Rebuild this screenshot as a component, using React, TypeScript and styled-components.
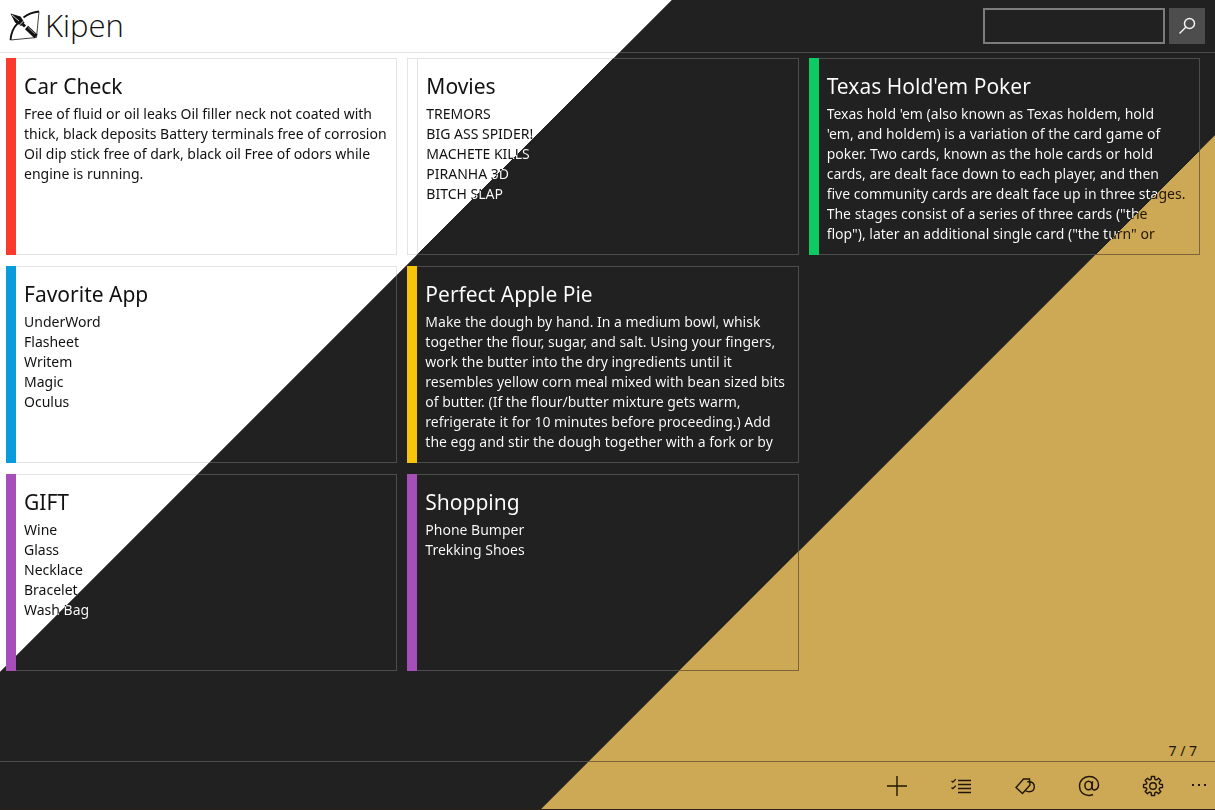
import React from "react";
import styled, { createGlobalStyle, css } from "styled-components";

const split = (a: string, b: string, c: string) =>
  `linear-gradient(135deg, ${a} 33.15%, ${b} 33.2%, ${b} 66.65%, ${c} 66.7%)`;

const surface = split("#ffffff", "#212121", "#cda956");
const lines = split("#e4e4e4", "#4c4c4c", "#7d6537");
const ink = split("#111111", "#ffffff", "#211604");

const Global = createGlobalStyle`
  *, *::before, *::after { box-sizing: border-box; }
  body {
    margin: 0;
    font-family: "Noto Sans", "Open Sans", sans-serif;
    background: ${surface} fixed;
  }
  h1, h2, p { margin: 0; font-weight: 400; }
  button { border: 0; padding: 0; background: none; color: inherit; font: inherit; }
`;

const inkText = css`
  color: #111111;
  background: ${ink} fixed;
  -webkit-background-clip: text;
  background-clip: text;
  -webkit-text-fill-color: transparent;
`;

const Page = styled.div`
  display: flex;
  flex-direction: column;
  min-height: 100vh;
`;

const Rule = styled.div`
  height: 1px;
  background: ${lines} fixed;
`;

const Header = styled.header`
  display: flex;
  align-items: center;
  justify-content: space-between;
  height: 52px;
  padding: 0 10px 0 8px;
`;

const Brand = styled.div`
  display: flex;
  align-items: center;
  gap: 5px;
  padding-bottom: 2px;
  color: #111111;
`;

const BrandName = styled.h1`
  font-family: "Open Sans", "Noto Sans", sans-serif;
  font-size: 31px;
  line-height: 48px;
  font-weight: 300;
`;

const Search = styled.form`
  display: flex;
  gap: 4px;
`;

const SearchInput = styled.input`
  width: 182px;
  height: 36px;
  padding: 0 8px;
  border: 2px solid #7c7c7c;
  border-radius: 0;
  background: transparent;
  color: #f4f4f4;
  font: inherit;
  outline: none;
`;

const SearchButton = styled.button`
  display: grid;
  place-items: center;
  width: 36px;
  height: 36px;
  background: #4d4d4d;
  color: #f4f4f4;
`;

const Notes = styled.main`
  flex: 1;
  display: grid;
  grid-template-columns: repeat(3, minmax(0, 1fr));
  grid-template-rows: repeat(3, 197px);
  grid-auto-flow: column;
  gap: 11px 10px;
  padding: 5px 15px 0 6px;
`;

const Card = styled.article`
  display: flex;
  padding: 1px;
  background: ${lines} fixed;
`;

const Stripe = styled.div<{ $color?: string }>`
  flex: none;
  width: 10px;
  margin: -1px 0 -1px -1px;
  ${(p) =>
    p.$color
      ? `background: ${p.$color};`
      : `margin: 0 1px 0 0; width: 9px; background: ${surface} fixed;`}
`;

const CardBody = styled.div`
  flex: 1;
  min-width: 0;
  padding: 10px 4px 0 8px;
  overflow: hidden;
  background: ${surface} fixed;
`;

const CardTitle = styled.h2`
  ${inkText}
  margin-bottom: 1px;
  font-size: 21px;
  line-height: 34px;
`;

const CardText = styled.p`
  ${inkText}
  font-size: 14px;
  line-height: 20px;
  white-space: pre-line;
`;

const Counter = styled.p`
  padding: 0 18px 0 0;
  text-align: right;
  font-size: 14px;
  line-height: 20px;
  color: #211604;
`;

const Footer = styled.footer`
  display: flex;
  justify-content: flex-end;
  height: 48px;
  border-bottom: 1px solid #2b2416;
  color: #211604;
`;

const ToolButton = styled.button<{ $width?: number }>`
  display: grid;
  place-items: center;
  width: ${(p) => p.$width ?? 64}px;
  height: 48px;
`;

const Icon = styled.svg`
  display: block;
  fill: none;
  stroke: currentColor;
`;

type Note = { title: string; text: string; color?: string };

const notes: Note[] = [
  {
    title: "Car Check",
    color: "#fb3a2e",
    text: "Free of fluid or oil leaks Oil filler neck not coated with\nthick, black deposits Battery terminals free of corrosion\nOil dip stick free of dark, black oil Free of odors while\nengine is running.",
  },
  { title: "Favorite App", color: "#0a9bdc", text: "UnderWord\nFlasheet\nWritem\nMagic\nOculus" },
  { title: "GIFT", color: "#a64fb8", text: "Wine\nGlass\nNecklace\nBracelet\nWash Bag" },
  { title: "Movies", text: "TREMORS\nBIG ASS SPIDER!\nMACHETE KILLS\nPIRANHA 3D\nBITCH SLAP" },
  {
    title: "Perfect Apple Pie",
    color: "#f7c30b",
    text: "Make the dough by hand. In a medium bowl, whisk\ntogether the flour, sugar, and salt. Using your fingers,\nwork the butter into the dry ingredients until it\nresembles yellow corn meal mixed with bean sized bits\nof butter. (If the flour/butter mixture gets warm,\nrefrigerate it for 10 minutes before proceeding.) Add\nthe egg and stir the dough together with a fork or by",
  },
  { title: "Shopping", color: "#a64fb8", text: "Phone Bumper\nTrekking Shoes" },
  {
    title: "Texas Hold'em Poker",
    color: "#0bcb62",
    text: "Texas hold 'em (also known as Texas holdem, hold\n'em, and holdem) is a variation of the card game of\npoker. Two cards, known as the hole cards or hold\ncards, are dealt face down to each player, and then\nfive community cards are dealt face up in three stages.\nThe stages consist of a series of three cards (\"the\nflop\"), later an additional single card (\"the turn\" or",
  },
];

const gearPath = (() => {
  const pts: string[] = [];
  for (let i = 0; i < 8; i++) {
    const a = (i * Math.PI) / 4;
    [
      [-0.24, 7.3],
      [-0.17, 9.6],
      [0.17, 9.6],
      [0.24, 7.3],
      [0.39, 6.8],
    ].forEach(([d, r]) => pts.push(`${(11 + r * Math.sin(a + d)).toFixed(2)} ${(11 - r * Math.cos(a + d)).toFixed(2)}`));
  }
  return `M${pts.join("L")}Z`;
})();

export default function App() {
  return (
    <Page>
      <Global />
      <Header>
        <Brand>
          <Icon width="32" height="32" viewBox="0 0 32 32" aria-hidden="true">
            <path d="M2.500 31C3 24 6 18 9.500 14.500M15.500 8.500C20 5 25 3 31 2.500" strokeWidth="1.8" />
            <path d="M31 2.500L28.500 28.500M2.500 31L28.500 28.500" strokeWidth="0.8" />
            <path d="M2.500 4.500L12.500 7.500L16.500 13.500L13 17L7 13.500Z" fill="currentColor" stroke="none" />
            <path d="M14.500 15L17 17.500" strokeWidth="3" />
            <path d="M18.500 18.500L28 27.500" strokeWidth="4.5" />
            <path d="M4 6L11 12" stroke="#fff" strokeWidth="0.8" />
            <path d="M11 16.500L16 11.500" stroke="#fff" strokeWidth="0.9" />
            <path d="M20 18.500L27 25" stroke="#fff" strokeWidth="0.5" />
          </Icon>
          <BrandName>Kipen</BrandName>
        </Brand>
        <Search onSubmit={(e: React.FormEvent) => e.preventDefault()}>
          <SearchInput type="text" aria-label="Search notes" />
          <SearchButton type="submit" aria-label="Search">
            <Icon width="18" height="18" viewBox="0 0 18 18" strokeWidth="1.5">
              <circle cx="11.500" cy="6.500" r="5" />
              <path d="M8 10L1.500 16.500" />
            </Icon>
          </SearchButton>
        </Search>
      </Header>
      <Rule />
      <Notes>
        {notes.map((n) => (
          <Card key={n.title}>
            <Stripe $color={n.color} />
            <CardBody>
              <CardTitle>{n.title}</CardTitle>
              <CardText>{n.text}</CardText>
            </CardBody>
          </Card>
        ))}
      </Notes>
      <Counter>7 / 7</Counter>
      <Rule />
      <Footer>
        <ToolButton aria-label="Add note">
          <Icon width="20" height="20" viewBox="0 0 20 20" strokeWidth="1.4">
            <path d="M10 0V20M0 10H20" />
          </Icon>
        </ToolButton>
        <ToolButton aria-label="Checklist">
          <Icon width="20" height="18" viewBox="0 0 20 18" strokeWidth="1.3">
            <path d="M7 3.500H20M7 7.500H20M7 11.500H20M7 15.500H20M0.500 4L1.800 5.200L4.800 2.200M0.500 10.500L1.800 11.700L4.800 8.700" />
          </Icon>
        </ToolButton>
        <ToolButton aria-label="Tags">
          <Icon width="22" height="20" viewBox="0 0 22 20" strokeWidth="1.4">
            <path d="M2 11.500L9.500 3H15.500L16 9L8.500 17.500Z" />
            <path d="M13.200 5.800H15.500C22 6.500 22 15.800 15 15.800L11.500 14.800" />
          </Icon>
        </ToolButton>
        <ToolButton aria-label="Mention">
          <Icon width="22" height="22" viewBox="0 0 22 22" strokeWidth="1.5">
            <ellipse cx="10.500" cy="10.500" rx="3.600" ry="4.300" />
            <path d="M14.500 6.200L14 12.500C14 16.500 20.500 15.500 20.500 9.800C20.500 4.800 16.500 1.500 11.300 1.500A9.600 9.600 0 0 0 1.500 11.300C1.500 16.500 5.200 20.500 10.500 20.500C12.200 20.500 13.600 20.200 15 19.500" />
          </Icon>
        </ToolButton>
        <ToolButton aria-label="Settings">
          <Icon width="22" height="22" viewBox="0 0 22 22" strokeWidth="1.4" strokeLinejoin="round">
            <path d={gearPath} />
            <circle cx="11" cy="11" r="3.300" />
          </Icon>
        </ToolButton>
        <ToolButton $width={30} aria-label="More">
          <Icon width="18" height="6" viewBox="0 0 18 6" strokeWidth="2">
            <path d="M1 2H3M7 2H9M13 2H15" />
          </Icon>
        </ToolButton>
      </Footer>
    </Page>
  );
}
